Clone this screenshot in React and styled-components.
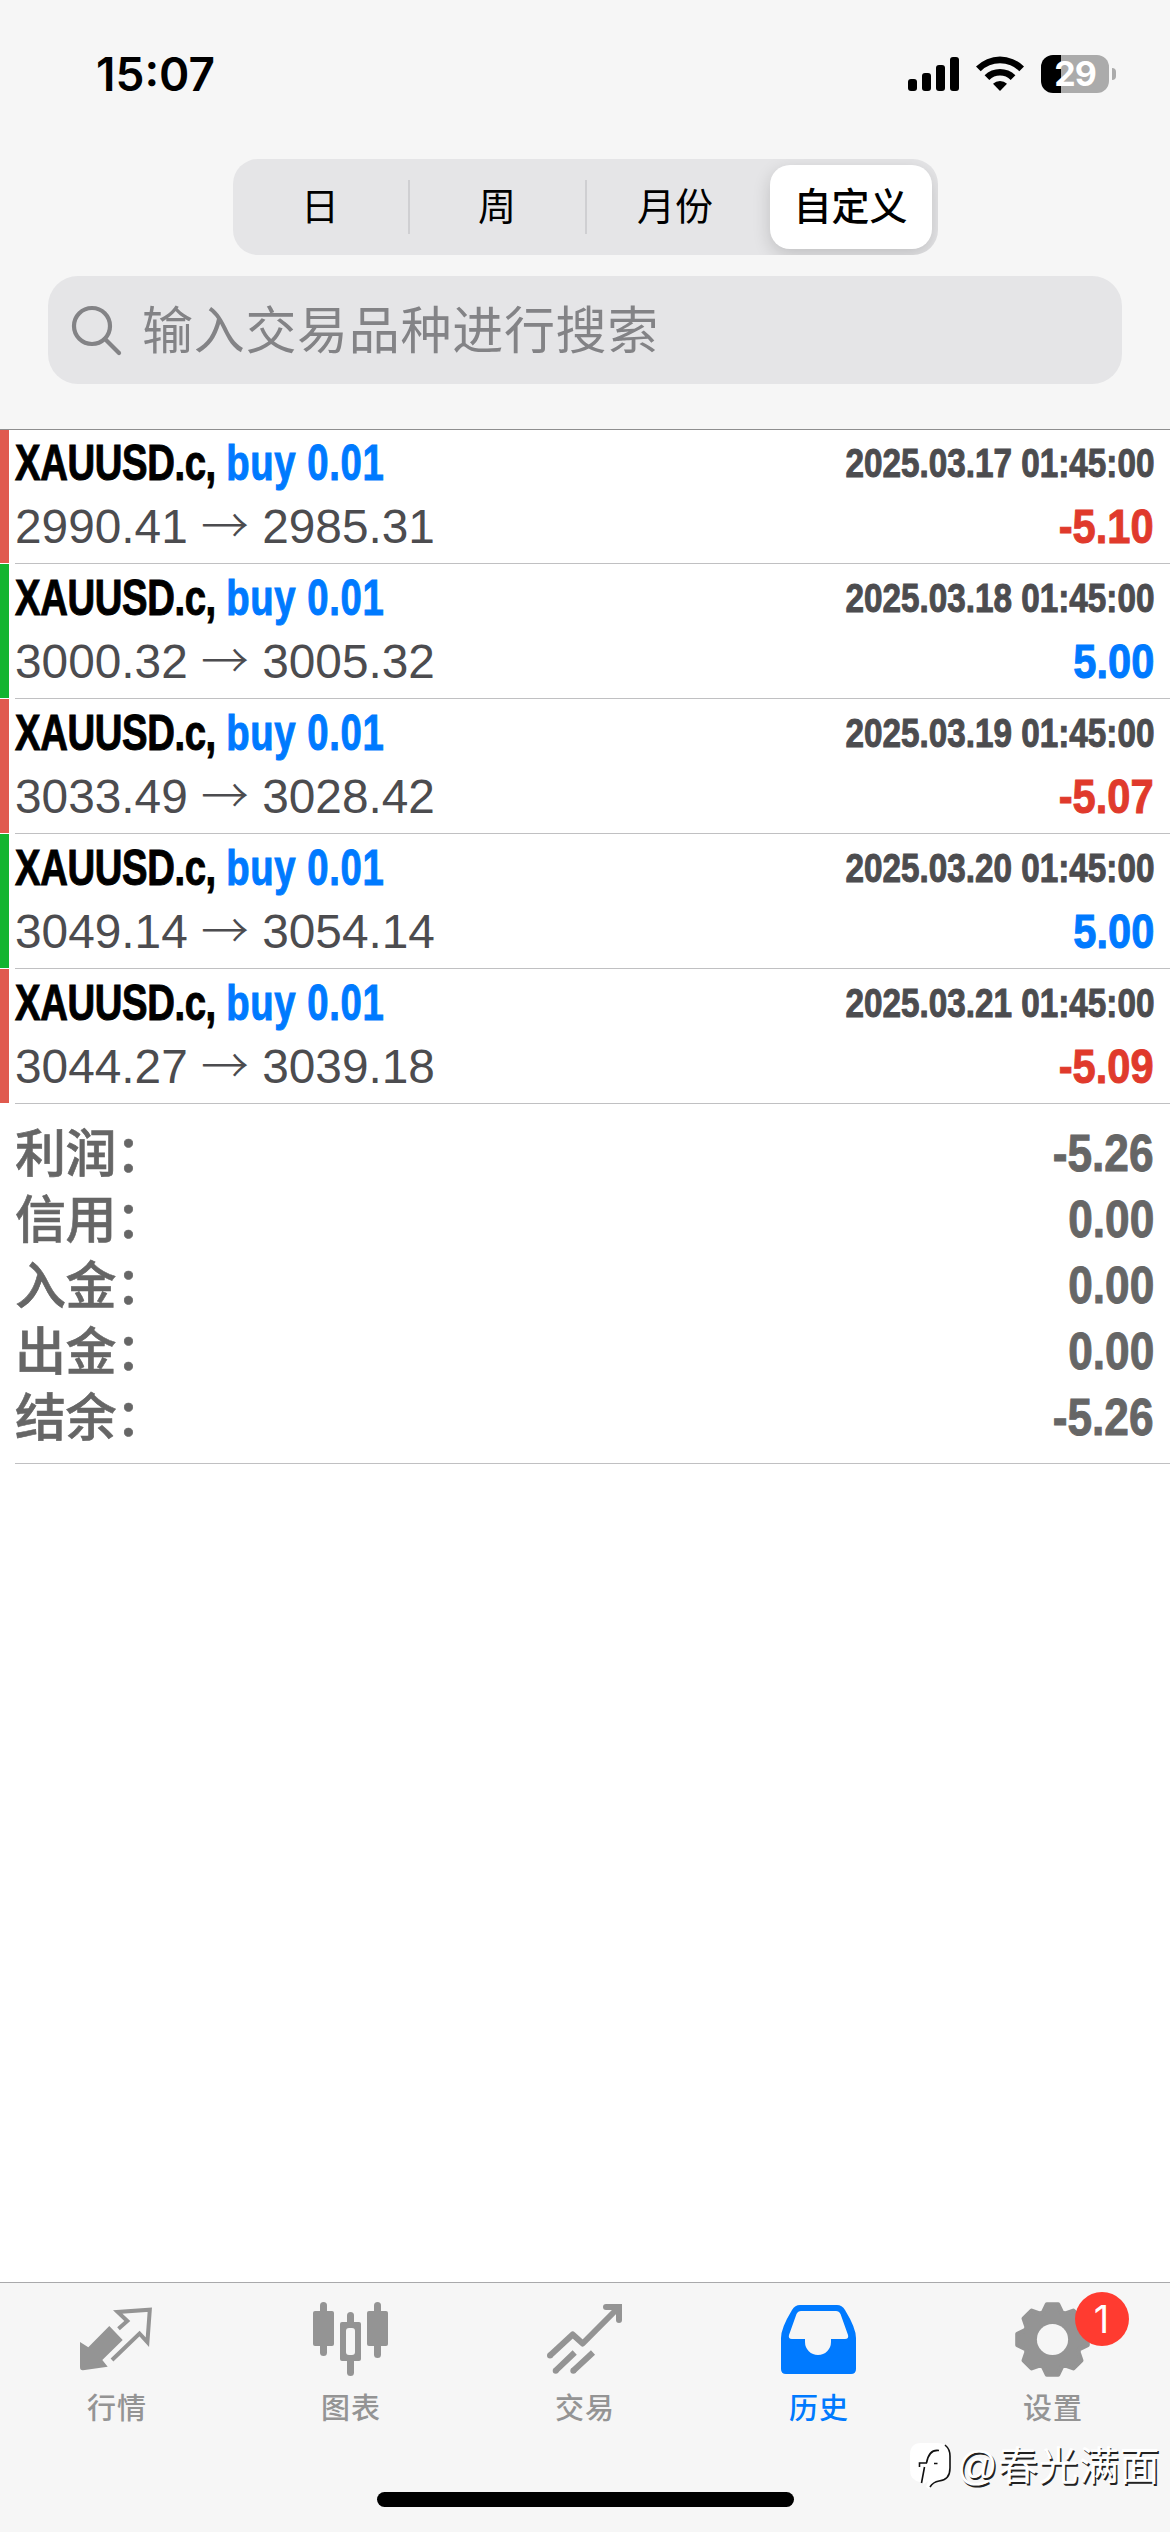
import React from "react";
import styled, { createGlobalStyle } from "styled-components";

const GlobalStyle = createGlobalStyle`
  * {
    box-sizing: border-box;
  }
  body {
    margin: 0;
    background: #fff;
    font-family: "Liberation Sans", "Noto Sans CJK SC", sans-serif;
  }
`;

const Screen = styled.div`
  display: flex;
  flex-direction: column;
  width: 1170px;
  height: 2532px;
  background: #fff;
  overflow: hidden;
`;

const Header = styled.header`
  display: flex;
  flex-direction: column;
  align-items: center;
  height: 430px;
  background: #f6f6f6;
  border-bottom: 1px solid #8e8e8f;
`;

const StatusBar = styled.div`
  display: flex;
  justify-content: space-between;
  align-items: center;
  width: 100%;
  height: 159px;
  padding: 0 54px 11px 96px;
`;

const Clock = styled.span`
  font-family: Inter, sans-serif;
  font-size: 46px;
  font-weight: 600;
  line-height: 60px;
`;

const StatusIcons = styled.div`
  display: flex;
  align-items: center;
  gap: 17px;
`;

const Battery = styled.div`
  display: flex;
  align-items: center;
  gap: 3px;
`;

const BatteryBody = styled.div`
  width: 68px;
  height: 38px;
  border-radius: 12px;
  background: linear-gradient(to right, #000 20px, #ababab 20px);
  color: #fff;
  font-family: Inter, sans-serif;
  font-size: 34px;
  font-weight: 700;
  line-height: 38px;
  letter-spacing: -1px;
  text-align: center;
`;

const BatteryCap = styled.div`
  width: 4px;
  height: 12px;
  border-radius: 0 4px 4px 0;
  background: #ababab;
`;

const Segments = styled.div`
  display: grid;
  grid-template-columns: repeat(3, 177px) 174px;
  width: 705px;
  height: 96px;
  border-radius: 25px;
  background: #e5e5e7;
  overflow: hidden;
`;

const Segment = styled.button`
  display: flex;
  align-items: center;
  justify-content: center;
  height: ${(props) => (props.$active ? "84px" : "54px")};
  margin: ${(props) => (props.$active ? "6px" : "21px 0")};
  padding: 0;
  border: 0;
  border-right: ${(props) => (props.$divider ? "2px solid #cfcfd2" : "0")};
  border-radius: ${(props) => (props.$active ? "20px" : "0")};
  background: ${(props) => (props.$active ? "#fff" : "transparent")};
  box-shadow: ${(props) =>
    props.$active ? "0 6px 18px rgba(0, 0, 0, 0.16)" : "none"};
  color: #000;
  font-family: "Liberation Sans", "Noto Sans CJK SC", sans-serif;
  font-size: 38px;
  font-weight: ${(props) => (props.$active ? 500 : 400)};
  line-height: 50px;
  white-space: nowrap;
`;

const SearchField = styled.div`
  display: flex;
  align-items: center;
  gap: 20px;
  width: 1074px;
  height: 108px;
  margin-top: 21px;
  padding-left: 23px;
  border-radius: 30px;
  background: #e5e5e7;
  color: #838386;
`;

const Placeholder = styled.span`
  padding-top: 4px;
  font-size: 51px;
  line-height: 60px;
  letter-spacing: 0.7px;
`;

const DealList = styled.div`
  display: flex;
  flex-direction: column;
`;

const Deal = styled.div`
  display: flex;
  height: 135px;

  &:first-child {
    height: 134px;
  }
`;

const DealMark = styled.div`
  width: 9px;
  margin: 0 6px 1px 0;
  background: ${(props) => (props.$profit ? "#13b52f" : "#e05a4e")};
`;

const DealBody = styled.div`
  display: flex;
  flex: 1;
  flex-direction: column;
  justify-content: flex-end;
  padding: 0 16px 4px 0;
  border-bottom: 1px solid #c0c0c2;
`;

const DealLine = styled.div`
  display: flex;
  justify-content: space-between;
  height: ${(props) => props.$height}px;
  line-height: ${(props) => props.$height}px;
`;

const Condensed = styled.span`
  display: inline-block;
  color: ${(props) => props.$color};
  font-size: ${(props) => props.$size}px;
  font-weight: 700;
  letter-spacing: ${(props) => props.$spacing || 0}px;
  white-space: nowrap;
  transform: scaleX(${(props) => props.$ratio});
  transform-origin: ${(props) => props.$from || "right"} center;
  -webkit-text-stroke: 1px currentColor;
`;

const Result = styled(Condensed)`
  line-height: 62px;
`;

const Side = styled.span`
  color: #007aff;
  letter-spacing: 0.8px;
`;

const Prices = styled.span`
  color: #4c4c4f;
  font-size: 47.8px;
`;

const Arrow = styled.span`
  font-family: "Noto Sans CJK SC", sans-serif;
  font-weight: 300;
  line-height: 1;
`;

const Summary = styled.div`
  height: 360px;
  margin-left: 15px;
  padding: 16px 16px 0 0;
  border-bottom: 1px solid #c0c0c2;
`;

const SummaryRow = styled.div`
  display: flex;
  justify-content: space-between;
  height: 66px;
  color: #666;
  line-height: 66px;
`;

const SummaryLabel = styled.span`
  padding-top: 2px;
  font-size: 51px;
  font-weight: 500;
  letter-spacing: -0.6px;
  -webkit-text-stroke: 0.6px currentColor;
`;

const Footer = styled.footer`
  position: relative;
  display: flex;
  flex-direction: column;
  align-items: center;
  justify-content: space-between;
  height: 250px;
  margin-top: auto;
  padding-bottom: 25px;
  border-top: 1px solid #a9a9ab;
  background: #f6f6f6;
`;

const Tabs = styled.nav`
  display: grid;
  grid-template-columns: repeat(5, 234px);
`;

const Tab = styled.div`
  display: flex;
  flex-direction: column;
  align-items: center;
  padding-top: 17px;
  color: ${(props) => (props.$active ? "#007aff" : "#949494")};
  font-family: "Noto Sans CJK SC", sans-serif;
  font-size: 29px;
  font-weight: 500;
  line-height: 40px;
  letter-spacing: 1px;
`;

const TabIcon = styled.div`
  position: relative;
  width: 76px;
  height: 78px;
  margin-bottom: 8px;
`;

const Badge = styled.span`
  position: absolute;
  top: -8px;
  left: 60px;
  width: 54px;
  height: 54px;
  border-radius: 50%;
  background: #ff3b30;
  color: #fff;
  font-family: Inter, sans-serif;
  font-size: 38px;
  font-weight: 400;
  line-height: 54px;
  text-align: center;
`;

const HomeIndicator = styled.div`
  width: 417px;
  height: 15px;
  border-radius: 8px;
  background: #000;
`;

const Watermark = styled.div`
  position: absolute;
  right: 10px;
  bottom: 38px;
  display: flex;
  align-items: center;
  gap: 2px;
  color: #fff;
  font-size: 40px;
  line-height: 56px;
  letter-spacing: 0.5px;
  text-shadow: 1.5px 1.5px 0 #222;
`;

const SignalIcon = () => (
  <svg width="51" height="38" viewBox="0 0 51 38">
    <rect x="0" y="24" width="9" height="12" rx="3" />
    <rect x="14" y="18" width="9" height="18" rx="3" />
    <rect x="28" y="10" width="9" height="26" rx="3" />
    <rect x="42" y="2" width="9" height="34" rx="3" />
  </svg>
);

const WifiIcon = () => (
  <svg width="48" height="38" viewBox="0 0 48 38">
    <path d="M0 11.5A34 34 0 0 1 48 11.5L43.3 16.2A27.5 27.5 0 0 0 4.700 16.2Z" />
    <path d="M8.600 20.200A22 22 0 0 1 39.400 20.200L34.700 24.900A15.500 15.500 0 0 0 13.300 24.900Z" />
    <path d="M17 28.800A10.200 10.200 0 0 1 31 28.800L24 36Z" />
  </svg>
);

const SearchIcon = () => (
  <svg
    width="51"
    height="51"
    viewBox="0 0 51 51"
    fill="none"
    stroke="#838386"
    strokeWidth="4.2"
    strokeLinecap="round"
  >
    <circle cx="21" cy="21" r="18" />
    <path d="M34 34L48 48" />
  </svg>
);

const QuotesIcon = () => (
  <svg width="76" height="78" viewBox="0 0 76 78">
    <path
      d="M1 42L9.300 47.300L30.300 26L43.700 40L23.300 60L28.700 66.700L4 70.300Q1 70.500 1 67Z"
      fill="currentColor"
    />
    <path
      d="M33 60L60.500 33.500L68.400 42.200L70.800 9.700L38.700 12L48.300 21L39.500 28.700"
      fill="none"
      stroke="currentColor"
      strokeWidth="4"
    />
  </svg>
);

const ChartIcon = () => (
  <svg width="76" height="78" viewBox="0 0 76 78" fill="currentColor">
    <rect x="0" y="11" width="21" height="35" rx="2" />
    <rect x="7" y="2" width="7" height="54" rx="3.5" />
    <rect x="27" y="22" width="21" height="39" rx="2" />
    <rect x="34" y="12" width="7" height="64" rx="3.5" />
    <rect x="33" y="28" width="9" height="27" rx="3" fill="#f6f6f6" />
    <rect x="54" y="11" width="21" height="35" rx="2" />
    <rect x="61" y="2" width="7" height="56" rx="3.5" />
  </svg>
);

const TradeIcon = () => (
  <svg
    width="76"
    height="78"
    viewBox="0 0 76 78"
    fill="none"
    stroke="currentColor"
    strokeWidth="6"
  >
    <path d="M3 55.500L25.700 34.500L35.700 43.500L70 9" strokeLinejoin="round" />
    <path d="M59 7H72V20" />
    <path d="M8.700 70.700L27.700 52.500M26.300 70.700L46 52.500" />
    <g fill="currentColor" stroke="none">
      <circle cx="3" cy="55.500" r="3" />
      <circle cx="59" cy="7" r="3" />
      <circle cx="72" cy="20" r="3" />
      <circle cx="8.700" cy="70.700" r="3" />
      <circle cx="26.300" cy="70.700" r="3" />
    </g>
  </svg>
);

const HistoryIcon = () => (
  <svg width="76" height="78" viewBox="0 0 76 78" fill="currentColor">
    <path
      fillRule="evenodd"
      d="M19 5H56Q61 5 64 10Q75 28 75 38V69Q75 74 70 74H5Q0 74 0 69V38Q0 28 11 10Q14 5 19 5ZM20 11Q17 11 15.500 14L8 35Q7 39 11 39H24V42A13 13 0 0 0 50 42V39H64Q68 39 67 35L59.500 14Q58 11 55 11Z"
    />
  </svg>
);

// four corners per tooth: base, tip, tip, base
const gearPoints = Array.from({ length: 8 })
  .flatMap((_, i) =>
    [
      [-19.5, 28.5],
      [-9, 35.5],
      [9, 35.5],
      [19.5, 28.5],
    ].map(([offset, radius]) => {
      const angle = ((i * 45 + offset) * Math.PI) / 180;
      const x = 37.5 + radius * Math.sin(angle);
      const y = 39.5 - radius * Math.cos(angle);
      return `${x.toFixed(2)},${y.toFixed(2)}`;
    })
  )
  .join(" ");

const SettingsIcon = () => (
  <svg width="76" height="78" viewBox="0 0 76 78">
    <polygon
      points={gearPoints}
      fill="currentColor"
      stroke="currentColor"
      strokeWidth="4.5"
      strokeLinejoin="round"
    />
    <circle cx="37.5" cy="39.5" r="15.600" fill="#f6f6f6" />
  </svg>
);

const WatermarkLogo = () => (
  <svg width="46" height="48" viewBox="0 0 46 48" fill="none">
    <path
      d="M12 1H28Q40 1 40 13V27Q40 38 28 39Q22 41 20 47L17 45L19 39L15 42L11 40Q1 38 1 28V13Q1 1 12 1Z"
      fill="#fff"
    />
    <path
      d="M36 3Q41 7 41 14V26Q41 38 30 39Q24 40 21 45"
      stroke="#111"
      strokeWidth="1.6"
    />
    <path
      d="M30 8.500Q20 7 17.500 21M18 21H10.500V25M15.500 25L12.500 41M25 21.500H28.500"
      stroke="#111"
      strokeWidth="1.6"
    />
  </svg>
);

const segments = ["日", "周", "月份", "自定义"];

const deals = [
  { open: "2990.41", close: "2985.31", date: "2025.03.17", result: "-5.10" },
  { open: "3000.32", close: "3005.32", date: "2025.03.18", result: "5.00" },
  { open: "3033.49", close: "3028.42", date: "2025.03.19", result: "-5.07" },
  { open: "3049.14", close: "3054.14", date: "2025.03.20", result: "5.00" },
  { open: "3044.27", close: "3039.18", date: "2025.03.21", result: "-5.09" },
];

const summary = [
  ["利润", "-5.26"],
  ["信用", "0.00"],
  ["入金", "0.00"],
  ["出金", "0.00"],
  ["结余", "-5.26"],
];

const tabs = [
  { label: "行情", icon: <QuotesIcon /> },
  { label: "图表", icon: <ChartIcon /> },
  { label: "交易", icon: <TradeIcon /> },
  { label: "历史", icon: <HistoryIcon />, active: true },
  { label: "设置", icon: <SettingsIcon />, badge: 1 },
];

const App = () => (
  <Screen>
    <GlobalStyle />
    <Header>
      <StatusBar>
        <Clock>15:07</Clock>
        <StatusIcons>
          <SignalIcon />
          <WifiIcon />
          <Battery>
            <BatteryBody>29</BatteryBody>
            <BatteryCap />
          </Battery>
        </StatusIcons>
      </StatusBar>
      <Segments>
        {segments.map((name, i) => (
          <Segment key={name} $active={i === 3} $divider={i < 2}>
            {name}
          </Segment>
        ))}
      </Segments>
      <SearchField>
        <SearchIcon />
        <Placeholder>输入交易品种进行搜索</Placeholder>
      </SearchField>
    </Header>
    <DealList>
      {deals.map(({ open, close, date, result }) => {
        const profit = !result.startsWith("-");
        return (
          <Deal key={date}>
            <DealMark $profit={profit} />
            <DealBody>
              <DealLine $height={63}>
                <Condensed
                  $size={50}
                  $ratio={0.766}
                  $spacing={-0.5}
                  $from="left"
                >
                  XAUUSD.c, <Side>buy 0.01</Side>
                </Condensed>
                <Condensed $size={40} $ratio={0.832} $color="#4c4c4f">
                  {date} 01:45:00
                </Condensed>
              </DealLine>
              <DealLine $height={64}>
                <Prices>
                  {open} <Arrow>→</Arrow> {close}
                </Prices>
                <Result
                  $size={49}
                  $ratio={0.85}
                  $color={profit ? "#007aff" : "#e03a2c"}
                >
                  {result}
                </Result>
              </DealLine>
            </DealBody>
          </Deal>
        );
      })}
    </DealList>
    <Summary>
      {summary.map(([label, value]) => (
        <SummaryRow key={label}>
          <SummaryLabel>{label}：</SummaryLabel>
          <Condensed $size={52} $ratio={0.85}>
            {value}
          </Condensed>
        </SummaryRow>
      ))}
    </Summary>
    <Footer>
      <Tabs>
        {tabs.map(({ label, icon, active, badge }) => (
          <Tab key={label} $active={active}>
            <TabIcon>
              {icon}
              {badge && <Badge>{badge}</Badge>}
            </TabIcon>
            {label}
          </Tab>
        ))}
      </Tabs>
      <HomeIndicator />
      <Watermark>
        <WatermarkLogo />
        @春光满面
      </Watermark>
    </Footer>
  </Screen>
);

export default App;
